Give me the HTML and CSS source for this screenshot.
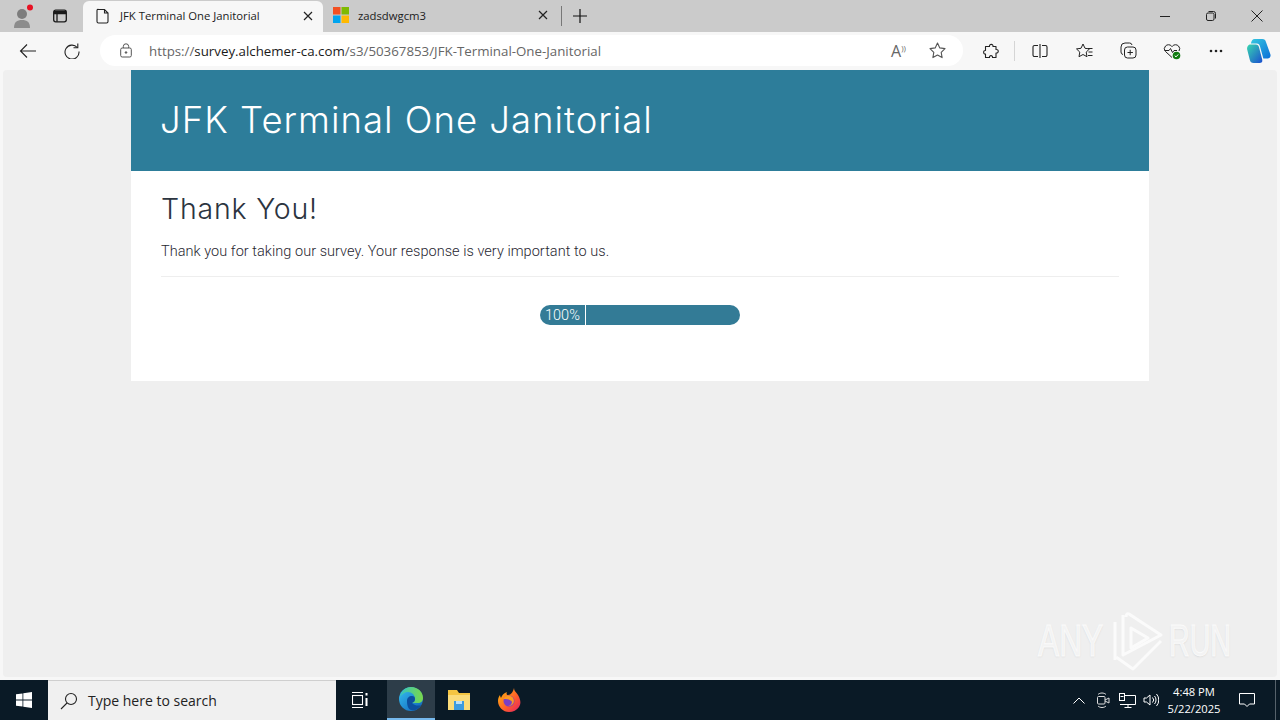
FILE: index.html
```html
<!DOCTYPE html>
<html lang="en">
<head>
<meta charset="utf-8">
<title>JFK Terminal One Janitorial</title>
<link rel="stylesheet" href="styles.css">
</head>
<body>
<div class="window">
  <header class="tabstrip">
    <div class="profile">
      <svg width="24" height="24" viewBox="0 0 24 24"><circle cx="11" cy="10" r="5" fill="#7d7d7d"/><path d="M3 24c0-6 3-8 8-8s8 2 8 8z" fill="#8c8c8c"/><circle cx="19" cy="3.500" r="3" fill="#e81123"/></svg>
    </div>
    <div class="strip-btn">
      <svg width="16" height="16" viewBox="0 0 16 16" fill="none" stroke="#1a1a1a" stroke-width="1.300"><rect x="1.700" y="2.200" width="12.600" height="11.600" rx="2"/><path d="M1.700 5.500h12.600M5 5.500v8.300"/><path d="M2 3h12v2.500H2z" fill="#1a1a1a" stroke="none"/></svg>
    </div>
    <div class="tab tab-active">
      <svg class="tab-icon" width="16" height="16" viewBox="0 0 16 16" fill="none" stroke="#222" stroke-width="1.100"><path d="M3.500 1.500h6l3.500 3.500v8.500a1.500 1.500 0 0 1-1.500 1.500h-8a1.500 1.500 0 0 1-1.500-1.500v-11a1 1 0 0 1 1.500-1zM9.500 1.500v3.500h3.500"/></svg>
      <span class="tab-title">JFK Terminal One Janitorial</span>
      <svg class="tab-close" width="10" height="10" viewBox="0 0 10 10" stroke="#222" stroke-width="1.200"><path d="M1 1l8 8M9 1l-8 8"/></svg>
    </div>
    <div class="tab tab-other">
      <svg class="tab-icon" width="16" height="16" viewBox="0 0 16 16"><rect width="7.500" height="7.500" fill="#f25022"/><rect x="8.500" width="7.500" height="7.500" fill="#7fba00"/><rect y="8.500" width="7.500" height="7.500" fill="#00a4ef"/><rect x="8.500" y="8.500" width="7.500" height="7.500" fill="#ffb900"/></svg>
      <span class="tab-title">zadsdwgcm3</span>
      <svg class="tab-close" width="10" height="10" viewBox="0 0 10 10" stroke="#222" stroke-width="1.200"><path d="M1 1l8 8M9 1l-8 8"/></svg>
    </div>
    <div class="tab-sep"></div>
    <div class="new-tab">
      <svg width="14" height="14" viewBox="0 0 14 14" stroke="#111" stroke-width="1.200"><path d="M7 0v14M0 7h14"/></svg>
    </div>
    <div class="win-controls">
      <div class="win-btn"><svg width="10" height="10" viewBox="0 0 10 10" stroke="#222"><path d="M0 5.500h10"/></svg></div>
      <div class="win-btn"><svg width="10" height="10" viewBox="0 0 10 10" fill="none" stroke="#222"><rect x=".5" y="2" width="7.500" height="7.500" rx="1.500"/><path d="M2.500 .5h5a2 2 0 0 1 2 2v5"/></svg></div>
      <div class="win-btn"><svg width="12" height="12" viewBox="0 0 12 12" stroke="#222"><path d="M.5.5l11 11M11.500.5l-11 11"/></svg></div>
    </div>
  </header>

  <nav class="toolbar">
    <div class="nav-btn nav-back">
      <svg width="18" height="16" viewBox="0 0 18 16" fill="none" stroke="#222" stroke-width="1.100"><path d="M17 8H1.500M8 1.500L1.500 8 8 14.500"/></svg>
    </div>
    <div class="nav-btn nav-reload">
      <svg width="16" height="16" viewBox="0 0 16 16" fill="none" stroke="#222" stroke-width="1.100"><path d="M13.300 4.500A7 7 0 1 0 15 8.500"/><path d="M13.800 .5v4.300H9.500"/></svg>
    </div>
    <div class="address">
      <svg class="lock" width="12" height="15" viewBox="0 0 12 15" fill="none" stroke="#555"><rect x=".7" y="5" width="10.600" height="9" rx="1.500"/><path d="M3.300 5V3.500a2.700 2.700 0 0 1 5.400 0V5"/><circle cx="6" cy="9.500" r=".8" fill="#555"/></svg>
      <div class="url"><span class="url-dim">https://</span><span class="url-host">survey.alchemer-ca.com</span><span class="url-dim">/s3/50367853/JFK-Terminal-One-Janitorial</span></div>
      <div class="read-aloud">A<span class="waves">))</span></div>
      <svg class="star" width="17" height="17" viewBox="0 0 17 17" fill="none" stroke="#555" stroke-width="1.100" stroke-linejoin="round"><path d="M8.500 1l2.300 4.900 5.200.7-3.800 3.700.9 5.300-4.600-2.600-4.600 2.600.9-5.300L1 6.600l5.200-.7z"/></svg>
    </div>
    <div class="tools">
      <div class="tool"><svg width="16" height="16" viewBox="0 0 16 16" fill="none" stroke="#222" stroke-width="1.100" stroke-linejoin="round"><path d="M5.500 3.500H6.500C6 .8 10.500 .5 10 3.500H13V6.500C16 6 16 10.500 13 10V14.500H9.500C10 12 6 12 6.500 14.500H2.500V11C0 11.500 0 7 2.500 7.500V3.500Z"/></svg></div>
      <div class="tool-sep"></div>
      <div class="tool"><svg width="16" height="14" viewBox="0 0 16 14" fill="none" stroke="#222" stroke-width="1.100"><path d="M6 1.500H2.500a1.500 1.500 0 0 0-1.500 1.500v8a1.500 1.500 0 0 0 1.500 1.500H6M10 1.500h3.500A1.500 1.500 0 0 1 15 3v8a1.500 1.500 0 0 1-1.500 1.500H10M8 0v14"/></svg></div>
      <div class="tool"><svg width="17" height="16" viewBox="0 0 17 16" fill="none" stroke="#222" stroke-width="1" stroke-linejoin="round"><path d="M7 1l2 4.300 4.500.6-3.300 3.200.8 4.600L7 11.500l-4 2.200.8-4.600L.5 5.900 5 5.300z"/><path d="M12 5.500h4.500M12.500 9h4M12 12.500h4.500"/></svg></div>
      <div class="tool"><svg width="17" height="17" viewBox="0 0 17 17" fill="none" stroke="#222" stroke-width="1"><path d="M3 12.500A2.500 2.500 0 0 1 1 10V5a4 4 0 0 1 4-4h4.500A2.500 2.500 0 0 1 12 3"/><rect x="4.500" y="5" width="11.500" height="11" rx="3"/><path d="M10.200 7.800v5.400M7.500 10.500h5.400"/></svg></div>
      <div class="tool"><svg width="18" height="18" viewBox="0 0 18 18" fill="none" stroke="#222" stroke-width="1"><path d="M9 15.500L2.500 9.500a4 4 0 0 1 0-5.500 4.200 4.200 0 0 1 6 0l.5.500.5-.5a4.200 4.200 0 0 1 6 0 4 4 0 0 1 .5 5"/><path d="M1.500 8.500H6l1.500-2 2 4 1.500-2h3"/><circle cx="13.500" cy="13.500" r="3.800" fill="#107c10" stroke="none"/><path d="M11.700 13.600l1.300 1.300 2.300-2.500" stroke="#fff"/></svg></div>
      <div class="tool"><svg width="14" height="4" viewBox="0 0 14 4" fill="#222"><circle cx="2" cy="2" r="1.300"/><circle cx="7" cy="2" r="1.300"/><circle cx="12" cy="2" r="1.300"/></svg></div>
      <div class="tool tool-copilot"><svg width="26" height="26" viewBox="0 0 24 24"><defs><linearGradient id="cpa" x1="0" y1="0" x2="1" y2="1"><stop offset="0" stop-color="#35c8e0"/><stop offset="1" stop-color="#0a6fd8"/></linearGradient><linearGradient id="cpb" x1="0" y1="0" x2="1" y2="1"><stop offset="0" stop-color="#38d6b0"/><stop offset="1" stop-color="#1a4fd0"/></linearGradient></defs><path d="M8 1h7c2 0 3 1 3.500 3l4 11c.8 2.500-1 4-3 4H16L13 8c-.5-2-1.500-3-3-3H4.500C5 3 6 1 8 1z" fill="url(#cpa)"/><path d="M4 6h5c1.800 0 2.500 1 3 2.500L15 20c.4 2-.6 3-2.500 3H7c-2 0-3-1-3.500-3L1.200 11C.5 8.500 2 6 4 6z" fill="url(#cpb)"/></svg></div>
    </div>
  </nav>

  <main class="viewport">
    <div class="page">
      <section class="survey">
        <div class="survey-head"><h1>JFK Terminal One Janitorial</h1></div>
        <div class="survey-body">
          <h2>Thank You!</h2>
          <p>Thank you for taking our survey. Your response is very important to us.</p>
          <hr>
          <div class="progress"><span class="progress-label">100%</span></div>
        </div>
      </section>
      <div class="watermark">
        <span class="wm-text wm-any">ANY</span>
        <svg width="56" height="62" viewBox="0 0 56 62" fill="none" stroke="#fbfbfb" stroke-width="3" stroke-linejoin="round"><path d="M7 12v38M15 5v40l38-20-32-21c-2-1-3 1-3 3"/><path d="M8 47l17 12 28-28"/><path d="M23 18v20l17-10z"/></svg>
        <span class="wm-text wm-run">RUN</span>
      </div>
    </div>
  </main>

  <footer class="taskbar">
    <div class="start">
      <svg width="16" height="16" viewBox="0 0 16 16" fill="#fff"><path d="M0 2.300l6.500-.9v6.200H0zM7.300 1.300L16 0v7.600H7.300zM0 8.400h6.500v6.200L0 13.700zM7.300 8.400H16V16l-8.700-1.200z"/></svg>
    </div>
    <div class="search">
      <svg width="18" height="18" viewBox="0 0 18 18" fill="none" stroke="#222" stroke-width="1.100"><circle cx="11" cy="7" r="5.500"/><path d="M7 11l-6 6"/></svg>
      <span>Type here to search</span>
    </div>
    <div class="task-item task-view">
      <svg width="16" height="16" viewBox="0 0 16 16" fill="none" stroke="#fff" stroke-width="1.100"><path d="M0 .5h11M0 15.500h11"/><rect x=".5" y="3.500" width="10" height="9"/><path d="M14.500 1v2.500M14.500 6v8" stroke-width="2"/></svg>
    </div>
    <div class="task-item task-active">
      <svg width="26" height="26" viewBox="0 0 26 26"><defs><linearGradient id="ega" x1="0" y1="0" x2="1" y2="1"><stop offset="0" stop-color="#35c1f1"/><stop offset="1" stop-color="#0f5fb8"/></linearGradient><linearGradient id="egb" x1="0" y1="0" x2="1" y2="0"><stop offset="0" stop-color="#36c4c0"/><stop offset="1" stop-color="#7ad84a"/></linearGradient></defs><circle cx="13" cy="13" r="12" fill="url(#ega)"/><path d="M2 11C3 5 8 1 13 1c7 0 12 5 12 11 0 3-2 5-5 5h-6c2-1 3-2 3-4 0-4-3-7-7-7-3 0-6 2-8 5z" fill="url(#egb)"/><path d="M9 15c0-3 2-5 5-5 2 0 3 1 3 3s-1 3-3 4c3 3 7 3 9 2-2 4-6 6-10 5-3-1-4-5-4-9z" fill="#0c4f9e"/></svg>
    </div>
    <div class="task-item">
      <svg width="24" height="22" viewBox="0 0 24 22"><path d="M1 1h9l2 3h11v17H1z" fill="#f4c542"/><path d="M1 6h22v15H1z" fill="#fbdc7a"/><rect x="7" y="12" width="10" height="9" fill="#3d9be0"/><rect x="9" y="12" width="6" height="3" fill="#bde0f7"/></svg>
    </div>
    <div class="task-item task-firefox">
      <svg width="24" height="24" viewBox="0 0 24 24"><defs><linearGradient id="ffa" x1="0" y1="0" x2="1" y2="1"><stop offset="0" stop-color="#ffc107"/><stop offset=".6" stop-color="#ff5a2c"/><stop offset="1" stop-color="#e01e6a"/></linearGradient></defs><path d="M17 0c0 3 2 4 4 7 3 5 3 9 1 12-2 3-6 5-10 5-6 0-11-5-11-11 0-2 .5-4 2-6 0 1 .5 2 1 3 1-3 3-5 6-6-1 2 0 3 1 3 3 0 5-3 6-7z" fill="url(#ffa)"/><circle cx="12" cy="13" r="5.500" fill="#7b3fc4"/><path d="M6.500 11c1-3 4-4 7-3 3 1 4 4 3 7-1 2-3 3-5 3 3-1 4-3 3-5-1-1-3-2-8-2z" fill="#ff9a1f"/></svg>
    </div>
    <div class="tray">
      <div class="tray-slot"><svg width="12" height="7" viewBox="0 0 12 7" fill="none" stroke="#fff"><path d="M.5 6.500L6 1l5.500 5.500"/></svg></div>
      <div class="tray-slot"><svg width="14" height="16" viewBox="0 0 14 16" fill="none" stroke="#ddd"><rect x="1.500" y="4.500" width="7.500" height="7.500" rx="1"/><path d="M9 8l4-2v5l-4-2M2 2.500c2-2 6-2 8 0M2 14c2 2 6 2 8 0"/></svg></div>
      <div class="tray-slot"><svg width="17" height="15" viewBox="0 0 17 15" fill="none" stroke="#fff"><path d="M5 2.500h11.500v9H1M9 11.500v3M5.500 14.500h7"/><rect x=".5" y=".5" width="5" height="7" fill="#0a1a26"/><path d="M1.500 3.500h3"/></svg></div>
      <div class="tray-slot"><svg width="16" height="14" viewBox="0 0 16 14" fill="none" stroke="#fff"><path d="M1 5h2.500L7 2v10L3.500 9H1zM9.500 4.500a3.500 3.500 0 0 1 0 5M11.500 3a6 6 0 0 1 0 8M13.500 1a9 9 0 0 1 0 12"/></svg></div>
      <div class="clock"><div>4:48 PM</div><div>5/22/2025</div></div>
      <div class="notify">
        <svg width="16" height="15" viewBox="0 0 16 15" fill="none" stroke="#fff"><path d="M.5.5h15v10.500h-5L8 13.500 5.500 11h-5z"/></svg>
      </div>
      <div class="show-desktop"></div>
    </div>
  </footer>
</div>
</body>
</html>
```
FILE: styles.css
```css
* { box-sizing: border-box; }
html, body { margin: 0; padding: 0; }
body { width: 1280px; height: 720px; overflow: hidden; font-family: "Liberation Sans", Arial, sans-serif; }
.window { width: 1280px; height: 720px; display: flex; flex-direction: column; }

.tabstrip { height: 32px; flex: none; background: #cbcbcb; display: flex; align-items: stretch; }
.profile { width: 44px; display: flex; align-items: center; justify-content: center; padding-left: 2px; }
.strip-btn { width: 39px; display: flex; align-items: center; justify-content: flex-start; padding-left: 8px; }
.tab { display: flex; align-items: center; font-family: "Open Sans", sans-serif; font-size: 11.300px; color: #1c1c1c; }
.tab-active { width: 240px; background: #f7f7f7; margin-top: 1px; border-radius: 6px 6px 0 0; padding: 0 10px 2px 12px; }
.tab-other { width: 238px; padding: 0 13px 2px 10px; }
.tab-icon { flex: none; }
.tab-title { flex: 1; padding-left: 9px; white-space: nowrap; }
.tab-close { flex: none; }
.tab-sep { width: 1px; height: 20px; background: #777; align-self: center; }
.new-tab { width: 36px; display: flex; align-items: center; justify-content: center; padding-bottom: 1px; }
.win-controls { margin-left: auto; display: flex; }
.win-btn { width: 46px; display: flex; align-items: center; justify-content: center; }

.toolbar { height: 38px; flex: none; background: #f7f7f7; display: flex; align-items: center; padding-bottom: 1px; }
.nav-btn { width: 44px; display: flex; align-items: center; justify-content: center; }
.nav-back { margin-left: 6px; }
.nav-reload { width: 44px; margin-right: 6px; }
.address { width: 863px; height: 31px; background: #fff; border-radius: 16px; display: flex; align-items: center; padding: 0 17px 0 20px; }
.lock { flex: none; }
.url { flex: 1; padding-left: 17px; font-family: "Open Sans", sans-serif; font-size: 13.300px; white-space: nowrap; }
.url-dim { color: #666; }
.url-host { color: #1a1a1a; }
.read-aloud { width: 38px; font-family: "Open Sans", sans-serif; font-size: 16px; color: #666; }
.waves { font-size: 8px; vertical-align: 6px; }
.star { flex: none; }
.tools { flex: 1; display: flex; align-items: center; padding-left: 6px; }
.tool { width: 44px; display: flex; align-items: center; justify-content: center; }
.tool-sep { width: 1px; height: 20px; background: #d5d5d5; margin: 0 3px 0 1px; }
.tool-copilot { width: 40px; margin-left: 1px; }

.viewport { flex: 1; min-height: 0; background: #f7f7f7; padding: 0 3px 3px; }
.page { height: 100%; background: #efefef; border-radius: 4px; position: relative; overflow: hidden; }
.survey { width: 1018px; margin: 0 auto; background: #fff; }
.survey-head { height: 101px; background: #2d7d9a; padding: 27px 29px 0; }
.survey-head h1 { margin: 0; font-family: Inter, sans-serif; font-weight: 300; font-size: 36.500px; line-height: 46px; letter-spacing: 1px; color: #fff; white-space: nowrap; }
.survey-body { height: 210px; padding: 20px 30px 0; }
.survey-body h2 { margin: 0; font-family: Inter, sans-serif; font-weight: 300; font-size: 28.500px; line-height: 36px; letter-spacing: .8px; color: #2c3440; }
.survey-body p { margin: 15px 0 0; font-family: Roboto, sans-serif; font-weight: 300; font-size: 14.500px; line-height: 20px; letter-spacing: .04px; color: #1f2630; }
.survey-body hr { border: 0; height: 1px; background: #eeeeee; margin: 14px 0 0; }
.progress { width: 200px; height: 20px; margin: 28px auto 0; border-radius: 10px; background: #337b96; overflow: hidden; }
.progress-label { display: block; width: 46px; height: 20px; border-right: 1px solid #fff; padding-left: 5px; font-family: Roboto, sans-serif; font-weight: 300; font-size: 14.500px; line-height: 22px; color: #fff; }

.watermark { position: absolute; left: 1035px; top: 540px; display: flex; align-items: center; gap: 5px; }
.wm-text { display: block; font-family: "Liberation Sans", sans-serif; font-size: 44px; line-height: 50px; color: #f3f3f3; -webkit-text-stroke: 1px #fbfbfb; text-shadow: 0 1px 2px #d4d4d4; transform-origin: left center; white-space: nowrap; }
.wm-any { width: 65px; transform: scaleX(.72); }
.wm-run { width: 62px; transform: scaleX(.65); }

.taskbar { height: 40px; flex: none; background: #0a1a26; display: flex; align-items: stretch; color: #fff; }
.start { width: 48px; display: flex; align-items: center; justify-content: center; }
.search { width: 288px; background: #f0f0f0; border-top: 1px solid #cfcfcf; display: flex; align-items: center; gap: 10px; padding-left: 12px; font-family: "Open Sans", sans-serif; font-size: 14px; color: #222; }
.task-item { width: 48px; display: flex; align-items: center; justify-content: center; }
.task-view { margin-right: 3px; }
.task-active { background: #2d3d49; border-bottom: 2px solid #76b9ed; }
.task-firefox { margin-left: 2px; }
.tray { margin-left: auto; display: flex; align-items: center; }
.tray-slot { width: 24px; display: flex; align-items: center; justify-content: center; }
.clock { width: 58px; margin-left: 2px; text-align: center; font-family: "Open Sans", sans-serif; font-size: 11.200px; line-height: 17px; color: #fff; }
.notify { width: 48px; display: flex; align-items: center; justify-content: center; }
.show-desktop { width: 9px; height: 40px; padding-left: 4px; background: linear-gradient(90deg, transparent 4px, #56626b 4px, #56626b 5px, transparent 5px); }
```
